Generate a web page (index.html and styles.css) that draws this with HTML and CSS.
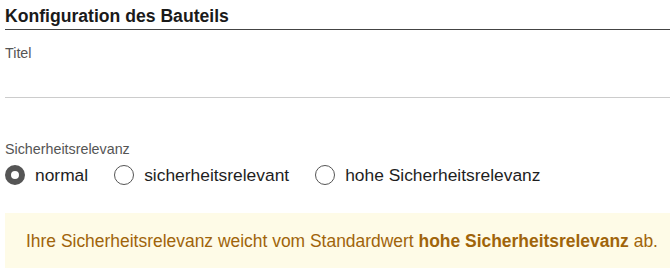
FILE: index.html
```html
<!DOCTYPE html>
<html lang="de">
<head>
<meta charset="utf-8">
<title>Konfiguration des Bauteils</title>
<link rel="stylesheet" href="styles.css">
</head>
<body>
<div class="panel">
  <h2 class="heading">Konfiguration des Bauteils</h2>
  <div class="field">
    <label class="field-label" for="titel">Titel</label>
    <input class="text-input" id="titel" type="text">
  </div>
  <div class="field field-radios">
    <div class="field-label">Sicherheitsrelevanz</div>
    <div class="radio-row">
      <label class="radio"><input type="radio" name="rel" checked><span class="radio-mark"></span><span class="radio-text">normal</span></label>
      <label class="radio"><input type="radio" name="rel"><span class="radio-mark"></span><span class="radio-text">sicherheitsrelevant</span></label>
      <label class="radio"><input type="radio" name="rel"><span class="radio-mark"></span><span class="radio-text">hohe Sicherheitsrelevanz</span></label>
    </div>
  </div>
  <div class="alert"><p class="alert-text">Ihre Sicherheitsrelevanz weicht vom Standardwert <strong>hohe Sicherheitsrelevanz</strong> ab.</p></div>
</div>
</body>
</html>
```
FILE: styles.css
```css
html, body {
  margin: 0;
  padding: 0;
  background: #ffffff;
}
body {
  font-family: "Liberation Sans", Arial, sans-serif;
  color: #222222;
}
.panel {
  padding-left: 5px;
  display: flex;
  flex-direction: column;
}
.heading {
  margin: 0;
  padding: 6px 0 3px 0;
  font-size: 17.6px;
  line-height: 20px;
  font-weight: bold;
  color: #1a1a1a;
  border-bottom: 1px solid #444444;
}
.field {
  display: flex;
  flex-direction: column;
  margin-top: 15px;
}
.field-label {
  font-size: 14.3px;
  line-height: 16px;
  color: #555555;
}
.text-input {
  height: 37px;
  box-sizing: border-box;
  border: none;
  border-bottom: 1px solid #cccccc;
  padding: 0;
  margin: 0;
  background: transparent;
  font: inherit;
  outline: none;
}
.field-radios {
  margin-top: 43px;
}
.radio-row {
  display: flex;
  align-items: center;
  gap: 26px;
  margin-top: 7px;
  height: 22px;
}
.radio {
  display: flex;
  align-items: center;
  gap: 10px;
  cursor: pointer;
}
.radio input {
  display: none;
}
.radio-mark {
  width: 20px;
  height: 20px;
  box-sizing: border-box;
  border-radius: 50%;
  border: 1px solid #555555;
  background: #ffffff;
}
.radio input:checked + .radio-mark {
  border: 6.5px solid #555555;
}
.radio-text {
  font-size: 17.4px;
  line-height: 22px;
  color: #1e1e1e;
}
.alert {
  margin-top: 27px;
  height: 55px;
  box-sizing: border-box;
  padding: 0 0 0 21px;
  display: flex;
  align-items: center;
  background: #fefbe7;
  color: #a0640a;
}
.alert-text {
  margin: 0;
  font-size: 17.45px;
  line-height: 22px;
}
.alert-text strong {
  font-weight: bold;
}
```
